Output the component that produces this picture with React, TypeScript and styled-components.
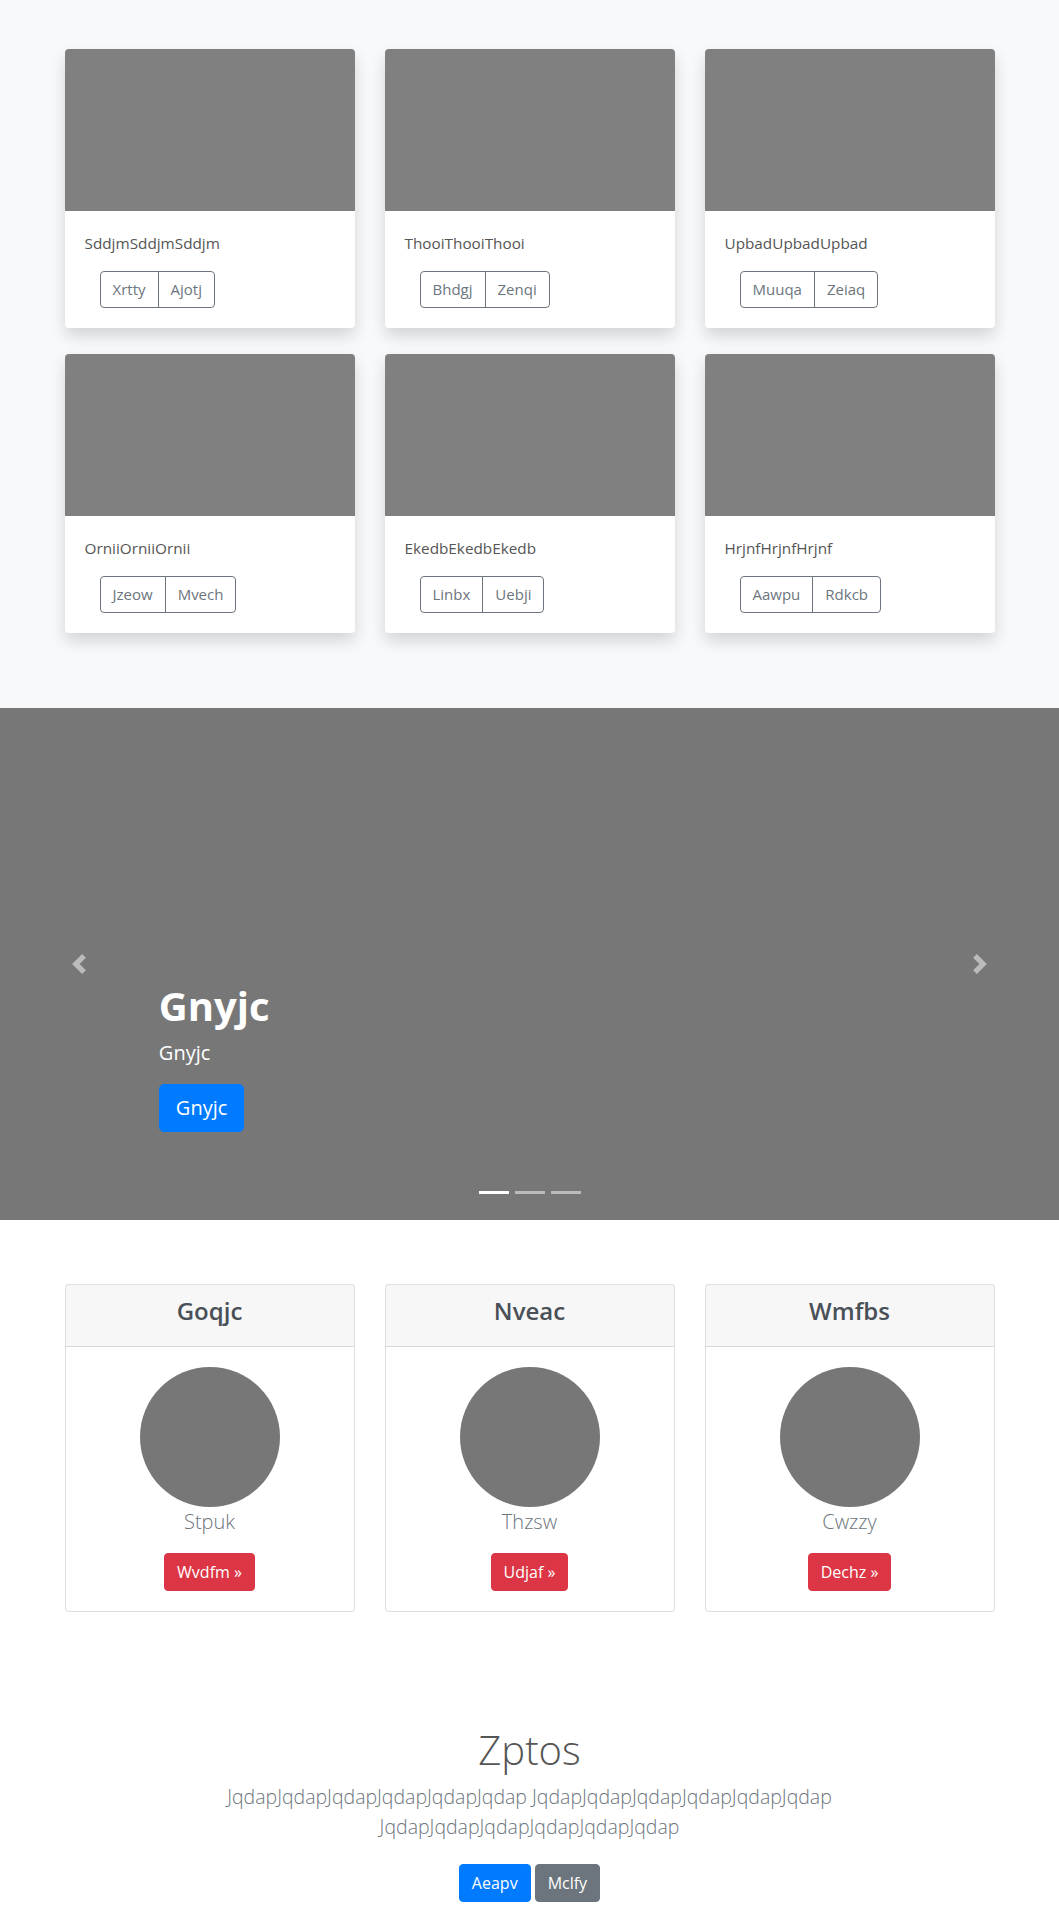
import React from "react";
import styled, { createGlobalStyle } from "styled-components";

const GlobalStyle = createGlobalStyle`
  * { box-sizing: border-box; }
  html, body { margin: 0; padding: 0; }
  body {
    font-family: "Open Sans", "Noto Sans", "Liberation Sans", sans-serif;
    font-size: 16px;
    line-height: 1.5;
    color: #555;
    background: #fff;
  }
`;

const Container = styled.div`
  width: 930px;
  margin: 0 auto;
`;

/* ---------- Top gallery ---------- */
const GallerySection = styled.section`
  background: #f8f9fa;
  padding: 49px 0 75px;
`;

const Grid = styled.div<{ $rowGap: number }>`
  display: grid;
  grid-template-columns: repeat(3, 1fr);
  column-gap: 30px;
  row-gap: ${(p) => p.$rowGap}px;
`;

const ShadowCard = styled.div`
  background: #fff;
  border-radius: 4px;
  overflow: hidden;
  box-shadow: 0 8px 16px rgba(0, 0, 0, 0.15);
`;

const Thumb = styled.div`
  height: 162px;
  background: #808080;
`;

const ThumbBody = styled.div`
  padding: 20px;
`;

const ThumbTitle = styled.p`
  margin: 0 0 16px;
  font-size: 15.3px;
  line-height: 24px;
  color: #555;
`;

const BtnGroup = styled.div`
  display: inline-flex;
  margin-left: 15px;
`;

const OutlineBtn = styled.button`
  font-family: inherit;
  font-size: 15px;
  line-height: 23px;
  padding: 6px 12px;
  color: #6c757d;
  background: transparent;
  border: 1px solid #6c757d;
  border-radius: 0;
  &:first-child {
    border-radius: 4px 0 0 4px;
  }
  &:last-child {
    margin-left: -1px;
    border-radius: 0 4px 4px 0;
  }
`;

/* ---------- Carousel ---------- */
const Carousel = styled.section`
  position: relative;
  height: 512px;
  background: #777;
  overflow: hidden;
`;

const Control = styled.a<{ $side: "left" | "right" }>`
  position: absolute;
  top: 0;
  bottom: 0;
  ${(p) => p.$side}: 0;
  width: 15%;
  display: flex;
  align-items: center;
  justify-content: center;
  opacity: 0.5;
  svg {
    width: 20px;
    height: 20px;
    display: block;
  }
`;

const Caption = styled.div`
  position: absolute;
  left: 15%;
  right: 15%;
  bottom: 88px;
  color: #fff;
  text-align: left;
`;

const CaptionTitle = styled.h1`
  margin: 0 0 8px;
  font-size: 40px;
  line-height: 48px;
  font-weight: 700;
`;

const CaptionText = styled.p`
  margin: 0 0 16px;
  font-size: 20px;
  line-height: 30px;
`;

const Btn = styled.button<{ $bg: string; $size?: "lg" | "md" }>`
  font-family: inherit;
  display: inline-block;
  color: #fff;
  background: ${(p) => p.$bg};
  border: 1px solid ${(p) => p.$bg};
  border-radius: ${(p) => (p.$size === "lg" ? "5px" : "4px")};
  font-size: ${(p) => (p.$size === "lg" ? "20px" : "16px")};
  line-height: ${(p) => (p.$size === "lg" ? "30px" : "24px")};
  padding: ${(p) => (p.$size === "lg" ? "8px 16px" : "6px 12px")};
  font-weight: 400;
`;

const Indicators = styled.ol`
  position: absolute;
  left: 0;
  right: 0;
  bottom: 0;
  margin: 0 0 16px;
  padding: 0;
  list-style: none;
  display: flex;
  justify-content: center;
`;

const Indicator = styled.li<{ $active?: boolean }>`
  width: 30px;
  height: 3px;
  margin: 0 3px;
  box-sizing: content-box;
  border-top: 10px solid transparent;
  border-bottom: 10px solid transparent;
  background: #fff;
  background-clip: padding-box;
  opacity: ${(p) => (p.$active ? 1 : 0.5)};
`;

/* ---------- Profile cards ---------- */
const ProfileSection = styled.section`
  padding: 64px 0 64px;
  background: #fff;
`;

const BorderCard = styled.div`
  border: 1px solid rgba(0, 0, 0, 0.125);
  border-radius: 4px;
  background: #fff;
  overflow: hidden;
`;

const CardHeader = styled.div`
  padding: 12px 20px;
  background: rgba(0, 0, 0, 0.03);
  border-bottom: 1px solid rgba(0, 0, 0, 0.125);
  text-align: center;
`;

const CardHeading = styled.h4`
  margin: 0 0 8px;
  font-size: 24px;
  line-height: 28.8px;
  font-weight: 600;
  color: #495057;
`;

const CardBody = styled.div`
  padding: 20px;
  text-align: center;
`;

const Avatar = styled.div`
  width: 140px;
  height: 140px;
  border-radius: 50%;
  background: #777;
  margin: 0 auto;
`;

const Name = styled.p`
  margin: 0 0 16px;
  font-size: 20px;
  line-height: 30px;
  font-weight: 300;
  color: #6c757d;
`;

/* ---------- CTA ---------- */
const CtaSection = styled.section`
  padding: 50px 0 48px;
  text-align: center;
  background: #fff;
`;

const CtaTitle = styled.h1`
  margin: 0 0 8px;
  font-size: 40px;
  line-height: 48px;
  font-weight: 300;
  color: #555;
`;

const CtaText = styled.p`
  max-width: 660px;
  margin: 0 auto 22px;
  font-size: 19.5px;
  line-height: 30px;
  font-weight: 300;
  color: #6c757d;
`;

const BtnRow = styled.div`
  display: flex;
  justify-content: center;
  gap: 4px;
`;

const PrevIcon = () => (
  <svg viewBox="0 0 8 8" fill="#fff">
    <path d="M5.25 0l-4 4 4 4 1.5-1.5L4.25 4l2.5-2.5L5.25 0z" />
  </svg>
);

const NextIcon = () => (
  <svg viewBox="0 0 8 8" fill="#fff">
    <path d="M2.75 0l-1.5 1.5L3.75 4l-2.5 2.5L2.75 8l4-4-4-4z" />
  </svg>
);

const thumbs = [
  { title: "SddjmSddjmSddjm", a: "Xrtty", b: "Ajotj" },
  { title: "ThooiThooiThooi", a: "Bhdgj", b: "Zenqi" },
  { title: "UpbadUpbadUpbad", a: "Muuqa", b: "Zeiaq" },
  { title: "OrniiOrniiOrnii", a: "Jzeow", b: "Mvech" },
  { title: "EkedbEkedbEkedb", a: "Linbx", b: "Uebji" },
  { title: "HrjnfHrjnfHrjnf", a: "Aawpu", b: "Rdkcb" },
];

const profiles = [
  { head: "Goqjc", name: "Stpuk", btn: "Wvdfm" },
  { head: "Nveac", name: "Thzsw", btn: "Udjaf" },
  { head: "Wmfbs", name: "Cwzzy", btn: "Dechz" },
];

export default function App() {
  const word = "JqdapJqdapJqdapJqdapJqdapJqdap";
  return (
    <>
      <GlobalStyle />
      <GallerySection>
        <Container>
          <Grid $rowGap={26}>
            {thumbs.map((t) => (
              <ShadowCard key={t.title}>
                <Thumb />
                <ThumbBody>
                  <ThumbTitle>{t.title}</ThumbTitle>
                  <BtnGroup>
                    <OutlineBtn>{t.a}</OutlineBtn>
                    <OutlineBtn>{t.b}</OutlineBtn>
                  </BtnGroup>
                </ThumbBody>
              </ShadowCard>
            ))}
          </Grid>
        </Container>
      </GallerySection>

      <Carousel>
        <Control $side="left">
          <PrevIcon />
        </Control>
        <Control $side="right">
          <NextIcon />
        </Control>
        <Caption>
          <CaptionTitle>Gnyjc</CaptionTitle>
          <CaptionText>Gnyjc</CaptionText>
          <Btn $bg="#007bff" $size="lg">Gnyjc</Btn>
        </Caption>
        <Indicators>
          <Indicator $active />
          <Indicator />
          <Indicator />
        </Indicators>
      </Carousel>

      <ProfileSection>
        <Container>
          <Grid $rowGap={30}>
            {profiles.map((p) => (
              <BorderCard key={p.head}>
                <CardHeader>
                  <CardHeading>{p.head}</CardHeading>
                </CardHeader>
                <CardBody>
                  <Avatar />
                  <Name>{p.name}</Name>
                  <Btn $bg="#dc3545">{p.btn} »</Btn>
                </CardBody>
              </BorderCard>
            ))}
          </Grid>
        </Container>
      </ProfileSection>

      <CtaSection>
        <Container>
          <CtaTitle>Zptos</CtaTitle>
          <CtaText>
            {word} {word} {word}
          </CtaText>
          <BtnRow>
            <Btn $bg="#007bff">Aeapv</Btn>
            <Btn $bg="#6c757d">Mclfy</Btn>
          </BtnRow>
        </Container>
      </CtaSection>
    </>
  );
}
